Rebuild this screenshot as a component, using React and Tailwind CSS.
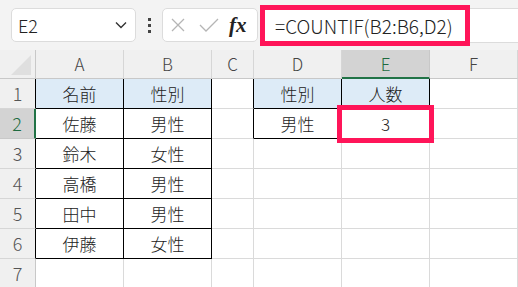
import React from 'react';

const font = { fontFamily: '"Noto Sans CJK JP", "Noto Sans", sans-serif' };

const cols = ['A', 'B', 'C', 'D', 'E', 'F'];

const rows = [
  ['名前', '性別', '', '性別', '人数', ''],
  ['佐藤', '男性', '', '男性', '3', ''],
  ['鈴木', '女性', '', '', '', ''],
  ['高橋', '男性', '', '', '', ''],
  ['田中', '男性', '', '', '', ''],
  ['伊藤', '女性', '', '', '', ''],
  ['', '', '', '', '', ''],
];

// is (row, col) inside one of the bordered tables
const inTable = (r, c) =>
  ((c === 0 || c === 1) && r >= 0 && r <= 5) || ((c === 3 || c === 4) && r >= 0 && r <= 1);

const TopBar = () => (
  <div className="flex items-center h-[50px] bg-[#f3f3f3]">
    {/* name box */}
    <div className="ml-[11px] w-[125px] h-[34px] rounded-[5px] border border-[#dcdcdc] bg-white flex items-center justify-between pl-[6px] pr-[8px]">
      <span className="text-[18px] font-light text-[#222] leading-none">E2</span>
      <svg width="12" height="8" viewBox="0 0 12 8">
        <path d="M1 1.5 L6 6.5 L11 1.5" fill="none" stroke="#333" strokeWidth="1.4" />
      </svg>
    </div>
    {/* vertical dots */}
    <div className="w-[26px] flex flex-col items-center gap-[3px]">
      <div className="w-[3px] h-[3px] bg-[#444]" />
      <div className="w-[3px] h-[3px] bg-[#444]" />
      <div className="w-[3px] h-[3px] bg-[#444]" />
    </div>
    {/* cancel / enter / fx */}
    <div className="w-[96px] h-[34px] rounded-[5px] border border-[#dcdcdc] bg-white flex items-center pl-[8px]">
      <svg width="14" height="14" viewBox="0 0 14 14">
        <path d="M1 1 L13 13 M13 1 L1 13" stroke="#b5b5b5" strokeWidth="1.3" />
      </svg>
      <svg className="ml-[14px]" width="20" height="14" viewBox="0 0 20 14">
        <path d="M1 7 L7 13 L19 1" fill="none" stroke="#b5b5b5" strokeWidth="1.3" />
      </svg>
      <span
        className="ml-[10px] text-[21px] italic font-bold text-[#222] leading-none"
        style={{ fontFamily: '"Liberation Serif", "DejaVu Serif", serif' }}
      >
        fx
      </span>
    </div>
    {/* formula with highlight */}
    <div className="ml-[2px] w-[210px] h-[41px] border-[5px] border-[#ff1559] bg-white flex items-center pl-[10px]">
      <span className="text-[19px] font-light text-[#222] leading-none">=COUNTIF(B2:B6,D2)</span>
    </div>
    <div className="flex-1 h-[35px] bg-white border-y border-[#dcdcdc]" />
  </div>
);

const App = () => {
  return (
    <div className="w-[518px] h-[287px] overflow-hidden bg-white" style={font}>
      <TopBar />
      <div className="grid grid-cols-[36px_88px_88px_42px_88px_88px_1fr] grid-rows-[29px_30px_30px_30px_30px_30px_30px_30px]">
        {/* corner */}
        <div className="bg-[#f0f0f0] border-r border-b border-[#c8c8c8] flex items-end justify-end pr-[4px] pb-[3px]">
          <svg width="20" height="20" viewBox="0 0 20 20">
            <path d="M20 0 L20 20 L0 20 Z" fill="#dfdfdf" />
          </svg>
        </div>
        {cols.map((c, i) =>
          i === 4 ? (
            <div
              key={c}
              className="bg-[#d3d3d3] text-[#1d6b40] border-r border-r-[#c8c8c8] border-b-2 border-b-[#217346] flex items-center justify-center text-[17px] font-light"
            >
              {c}
            </div>
          ) : (
            <div
              key={c}
              className="bg-[#f0f0f0] text-[#444] border-r border-r-[#d6d6d6] border-b border-b-[#c8c8c8] flex items-center justify-center text-[17px] font-light"
            >
              {c}
            </div>
          )
        )}

        {rows.map((cells, r) => (
          <React.Fragment key={r}>
            {r === 1 ? (
              <div className="bg-[#d3d3d3] text-[#1d6b40] border-r-2 border-r-[#217346] border-b border-b-[#c8c8c8] flex items-center justify-center text-[18px] font-light">
                {r + 1}
              </div>
            ) : (
              <div
                className={
                  'bg-[#f0f0f0] text-[#555] border-b border-b-[#d6d6d6] border-r flex items-center justify-center text-[18px] font-light ' +
                  (inTable(r, 0) ? 'border-r-black' : 'border-r-[#c8c8c8]')
                }
              >
                {r + 1}
              </div>
            )}
            {cells.map((t, c) => {
              const inside = inTable(r, c);
              const rightBlack = inside || inTable(r, c + 1);
              const bottomBlack = inside;
              return (
                <div
                  key={c}
                  className={
                    'relative border-r border-b flex items-center justify-center text-[17px] font-light text-[#222] ' +
                    (rightBlack ? 'border-r-black ' : 'border-r-[#dadada] ') +
                    (bottomBlack ? 'border-b-black ' : 'border-b-[#dadada] ') +
                    (r === 0 && inside ? 'bg-[#ddebf7]' : 'bg-white')
                  }
                >
                  {t}
                  {r === 1 && c === 4 && (
                    <div className="absolute z-10 -left-[5px] -top-[4px] -right-[5px] -bottom-[5px] border-[5px] border-[#ff1559]" />
                  )}
                </div>
              );
            })}
          </React.Fragment>
        ))}
      </div>
    </div>
  );
};

export default App;
